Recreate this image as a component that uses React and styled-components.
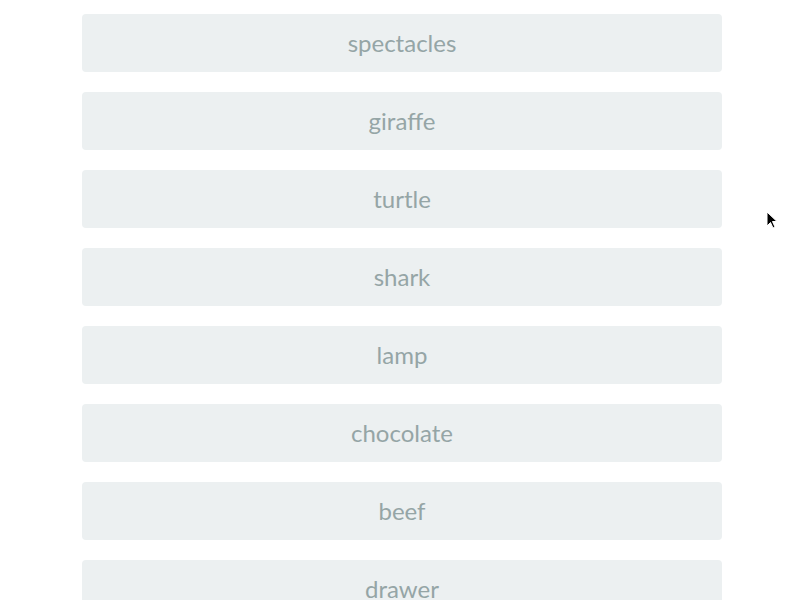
import React from "react";
import styled, { createGlobalStyle } from "styled-components";

const Global = createGlobalStyle`
  html, body { margin: 0; padding: 0; background: #ffffff; overflow: hidden; }
  body { font-family: Lato, "Open Sans", sans-serif; }
`;

const List = styled.div`
  display: flex;
  flex-direction: column;
  gap: 20px;
  width: 640px;
  margin-left: 82px;
  padding-top: 14px;
`;

const Card = styled.div`
  height: 58px;
  line-height: 58px;
  background: #ecf0f1;
  border-radius: 4px;
  text-align: center;
  font-family: Lato, sans-serif;
  font-size: 24px;
  color: #95a5a6;
`;

const Cursor = styled.svg`
  position: absolute;
  left: 766px;
  top: 211px;
`;

const items = ["spectacles", "giraffe", "turtle", "shark", "lamp", "chocolate", "beef", "drawer"];

export default function App() {
  return (
    <>
      <Global />
      <List>
        {items.map((t) => (
          <Card key={t}>{t}</Card>
        ))}
      </List>
      <Cursor width="12" height="19" viewBox="0 0 12 19">
        <path d="M1 1 L1 15 L4.5 11.5 L7 17 L9 16 L6.5 10.5 L11 10.5 Z" fill="#000" stroke="#fff" strokeWidth="1" />
      </Cursor>
    </>
  );
}
